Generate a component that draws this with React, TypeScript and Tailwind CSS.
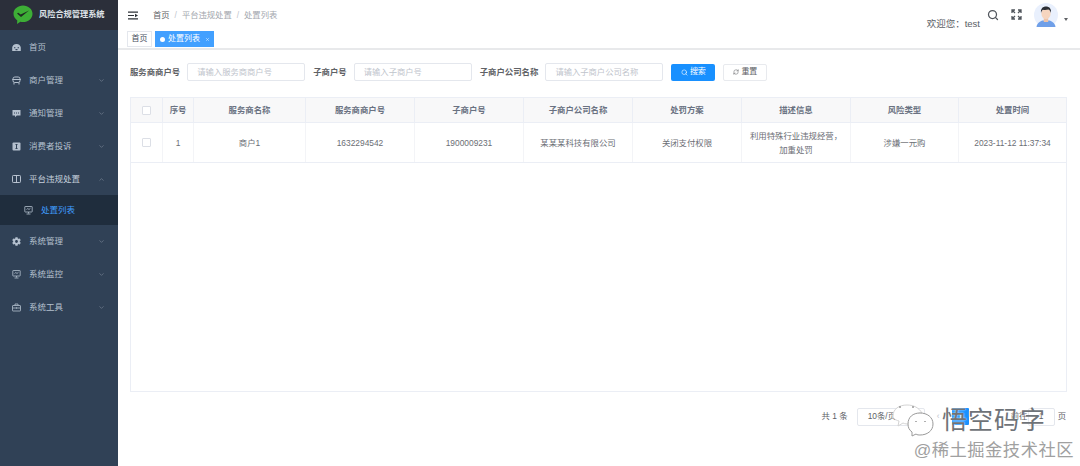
import React from 'react';
import { ChevronDown, ChevronUp, Search, RefreshCw, X } from 'lucide-react';
import { FaCog } from 'react-icons/fa';

const font = "font-['Liberation_Sans','Noto_Sans_CJK_SC',sans-serif]";

const HomeIcon = () => (
  <svg width="9" height="9" viewBox="0 0 9 9" className="shrink-0" fill="currentColor">
    <path d="M4.500 1C2 1 .4 2.600.2 4.500V8h8.600V4.500C8.600 2.600 7 1 4.500 1zM2 4.200h1.400v1H2zm3.600 0H7v1H5.600zM3.500 6h2v1.200h-2z" fillRule="evenodd" />
  </svg>
);
const BusIcon = () => (
  <svg width="9" height="9" viewBox="0 0 9 9" className="shrink-0" fill="none" stroke="currentColor" strokeWidth="1">
    <rect x="1" y="1" width="7" height="5.500" rx="1.800" />
    <path d="M.3 3.500h8.400M2 6.500V8.500M7 6.500V8.500" />
  </svg>
);
const ChatIcon = () => (
  <svg width="9" height="9" viewBox="0 0 9 9" className="shrink-0" fill="currentColor">
    <path d="M.5 1h8v5.500H4.800L3 8.300V6.500H.5z" />
    <path d="M2 3.400h1v1H2zm2 0h1v1H4zm2 0h1v1H6z" fill="#304156" />
  </svg>
);
const InfoIcon = () => (
  <svg width="9" height="9" viewBox="0 0 9 9" className="shrink-0">
    <rect x=".5" y=".5" width="8" height="8" rx="1" fill="currentColor" />
    <path d="M3.500 2h2v1h-.5v3h.5v1h-2V6H4V3h-.5z" fill="#304156" />
  </svg>
);
const BookIcon = () => (
  <svg width="9" height="8" viewBox="0 0 9 8" className="shrink-0" fill="none" stroke="currentColor" strokeWidth=".9">
    <rect x=".5" y=".5" width="8" height="7" rx=".8" />
    <path d="M4.500.5v7" />
  </svg>
);
const ScreenIcon = () => (
  <svg width="9" height="9" viewBox="0 0 9 9" className="shrink-0" fill="none" stroke="currentColor" strokeWidth=".8">
    <rect x=".8" y=".5" width="7.400" height="5.500" rx=".4" />
    <path d="M2.500 3.500l1.300-1 1.200 1 1.500-1.300M4.500 6v1.500M2.500 8h4" />
  </svg>
);
const ToolIcon = () => (
  <svg width="9" height="9" viewBox="0 0 9 9" className="shrink-0" fill="none" stroke="currentColor" strokeWidth=".8">
    <rect x=".5" y="2.500" width="8" height="5.500" rx=".4" />
    <path d="M3 2.500V1h3v1.500M.5 5h8M4.500 4.300v1.400" />
  </svg>
);

const menu = [
  { label: '首页', icon: <HomeIcon />, arrow: false, h: 'h-[34px]' },
  { label: '商户管理', icon: <BusIcon />, arrow: true, h: 'h-[33px]' },
  { label: '通知管理', icon: <ChatIcon />, arrow: true, h: 'h-[33px]' },
  { label: '消费者投诉', icon: <InfoIcon />, arrow: true, h: 'h-[33px]' },
];

const menuBottom = [
  { label: '系统管理', icon: <FaCog size={9} className="shrink-0" /> },
  { label: '系统监控', icon: <ScreenIcon /> },
  { label: '系统工具', icon: <ToolIcon /> },
];

const columns = [
  { title: '序号', width: 'w-[31px]', value: '1' },
  { title: '服务商名称', width: 'w-[112px]', value: '商户1' },
  { title: '服务商商户号', width: 'w-[109px]', value: '1632294542' },
  { title: '子商户号', width: 'w-[109px]', value: '1900009231' },
  { title: '子商户公司名称', width: 'w-[109px]', value: '某某某科技有限公司' },
  { title: '处罚方案', width: 'w-[109px]', value: '关闭支付权限' },
  { title: '描述信息', width: 'w-[109px]', value: '利用特殊行业违规经营，加重处罚' },
  { title: '风险类型', width: 'w-[108px]', value: '涉嫌一元购' },
  { title: '处置时间', width: 'flex-1', value: '2023-11-12 11:37:34' },
];

const Logo = () => (
  <svg width="20" height="20" viewBox="0 0 20 20" className="shrink-0">
    <path d="M10 .5c5.200 0 9.500 3.600 9.500 8.300 0 4.600-4.300 8.300-9.500 8.300-.9 0-1.800-.1-2.600-.3L4 19l.3-3.600C2 13.900.5 11.500.5 8.800.5 4.100 4.800.5 10 .5z" fill="#3dae36" />
    <path d="M4 8.600l1.200-.9 2.500 1.900 8.300-4.200-8 6.500z" fill="#1f2a22" />
  </svg>
);

const Avatar = () => (
  <svg width="24" height="24" viewBox="0 0 24 24">
    <circle cx="12" cy="12" r="12" fill="#e9f0fd" />
    <path d="M2.500 24c.5-4 4-6 6-6.500h7c2 .5 5.500 2.500 6 6.500z" fill="#6f9fe8" />
    <rect x="9.800" y="14" width="4.400" height="5" fill="#eec3a8" />
    <ellipse cx="12" cy="10.500" rx="4.600" ry="5.600" fill="#f6d5bf" />
    <path d="M7 10c-.6-4.500 2-6.500 5-6.500s5.600 2 5 6.500c-.4-2-1.500-3-2.500-3.500-2 .6-4.500.6-5.500.2-1 .6-1.700 1.800-2 3.300z" fill="#2b2f36" />
  </svg>
);

const Field = ({ label, placeholder, inputW }: { label: string; placeholder: string; inputW: string }) => (
  <div className="flex items-center">
    <span className="text-[8.400px] font-bold text-[#606266] whitespace-nowrap">{label}</span>
    <div className={`${inputW} ml-[7px] h-[18px] border border-[#e4e7ed] rounded-[2px] flex items-center pl-[9px] text-[8.300px] text-[#c0c4cc] whitespace-nowrap`}>
      {placeholder}
    </div>
  </div>
);

export default function App() {
  return (
    <div className={`${font} relative flex h-[466px] w-[1080px] overflow-hidden bg-white`}>
      <aside className="w-[118px] shrink-0 bg-[#304156] text-[#b4c0ce] text-[8.500px]">
        <div className="h-[30px] bg-[#2b2f3a] flex items-center pl-[13px] gap-[6px]">
          <Logo />
          <span className="text-[8.200px] font-bold text-[#dfe3e8] whitespace-nowrap">风险合规管理系统</span>
        </div>
        {menu.map((m) => (
          <div key={m.label} className={`${m.h} flex items-center pl-[12px] pr-[13px]`}>
            {m.icon}
            <span className="ml-[8px] flex-1">{m.label}</span>
            {m.arrow && <ChevronDown size={7} className="text-[#7f8b9b]" />}
          </div>
        ))}
        <div className="h-[32px] flex items-center pl-[12px] pr-[13px] text-[#c5cfdb]">
          <BookIcon />
          <span className="ml-[8px] flex-1">平台违规处置</span>
          <ChevronUp size={7} className="text-[#7f8b9b]" />
        </div>
        <div className="h-[30px] flex items-center pl-[24px] bg-[#1f2d3d]">
          <ScreenIcon />
          <span className="ml-[8px] text-[#409eff]">处置列表</span>
        </div>
        {menuBottom.map((m) => (
          <div key={m.label} className="h-[33px] flex items-center pl-[12px] pr-[13px]">
            {m.icon}
            <span className="ml-[8px] flex-1">{m.label}</span>
            <ChevronDown size={7} className="text-[#7f8b9b]" />
          </div>
        ))}
      </aside>

      <main className="flex-1 min-w-0 flex flex-col">
        <header className="h-[30px] flex items-center pl-[10px] pr-[12px]">
          <svg width="10" height="9" viewBox="0 0 10 9" className="shrink-0">
            <path d="M0 .5h10v1.200H0zM0 7.300h10v1.200H0zM0 3.900h6v1.200H0z" fill="#2f3338" />
            <path d="M7 2.800l3 1.700-3 1.700z" fill="#2f3338" />
          </svg>
          <div className="ml-[15px] text-[8.300px] flex gap-[5px] text-[#a3a7ae]">
            <span className="text-[#606266]">首页</span>
            <span className="text-[#c0c4cc]">/</span>
            <span>平台违规处置</span>
            <span className="text-[#c0c4cc]">/</span>
            <span>处置列表</span>
          </div>
          <div className="flex-1" />
          <span className="text-[9.500px] text-[#5a5e66] mt-[19px] whitespace-nowrap">欢迎您：test</span>
          <Search size={12} strokeWidth={2.500} className="ml-[7px] text-[#50555c] -mt-[1px]" />
          <svg width="11" height="11" viewBox="0 0 11 11" className="ml-[12px] -mt-[1px]">
            <path d="M1 4V1h3M1 1l3 3M10 4V1H7M10 1L7 4M1 7v3h3M1 10l3-3M10 7v3H7M10 10L7 7" fill="none" stroke="#50555c" strokeWidth="1.300" />
          </svg>
          <div className="ml-[12px]"><Avatar /></div>
          <span className="ml-[6px] mt-[9px] w-0 h-0 border-x-[2.500px] border-x-transparent border-t-[3px] border-t-[#606266]" />
        </header>

        <div className="h-[20px] flex items-center pl-[9px] gap-[3px] border-b-2 border-[#e8e9eb]">
          <span className="h-[16px] w-[25px] flex items-center justify-center border border-[#e4e7ed] text-[8px] text-[#495060]">首页</span>
          <span className="h-[16px] w-[59px] flex items-center bg-[#42a0ff] text-white text-[8px] pl-[5px]">
            <span className="w-[5px] h-[5px] rounded-full bg-white mr-[3px]" />
            处置列表
            <X size={5} className="ml-[5px]" />
          </span>
        </div>

        <section className="flex-1 px-[12px] min-h-0 flex flex-col">
          <div className="pb-[3px] flex items-center h-[47px]">
            <Field label="服务商商户号" placeholder="请输入服务商商户号" inputW="w-[118px]" />
            <div className="w-[8px]" />
            <Field label="子商户号" placeholder="请输入子商户号" inputW="w-[118px]" />
            <div className="w-[8px]" />
            <Field label="子商户公司名称" placeholder="请输入子商户公司名称" inputW="w-[118px]" />
            <button className="ml-[8px] h-[17px] w-[44px] bg-[#1890ff] rounded-[2px] text-white text-[8px] flex items-center justify-center gap-[2px]">
              <Search size={7} />搜索
            </button>
            <button className="ml-[8px] h-[17px] w-[44px] border border-[#e8eaee] rounded-[2px] text-[#606266] text-[8px] flex items-center justify-center gap-[2px]">
              <RefreshCw size={6} />重置
            </button>
          </div>

          <div className="h-[295px] w-[937px] border border-[#ebeef5] text-[8.400px] text-[#6b6e75]">
            <div className="flex h-[25px] bg-[#f8f8f9] border-b border-[#ebeef5] font-bold text-[#6a7282]">
              <div className="w-[32px] shrink-0 flex items-center justify-center border-r border-[#ebeef5]">
                <span className="w-[9px] h-[9px] bg-white border border-[#dcdfe6] rounded-[1px]" />
              </div>
              {columns.map((c, i) => (
                <div key={c.title} className={`${c.width} shrink-0 flex items-center justify-center whitespace-nowrap ${i < columns.length - 1 ? 'border-r border-[#ebeef5]' : ''}`}>
                  {c.title}
                </div>
              ))}
            </div>
            <div className="flex h-[40px] border-b border-[#ebeef5]">
              <div className="w-[32px] shrink-0 flex items-center justify-center border-r border-[#f3f4f7]">
                <span className="w-[9px] h-[9px] bg-white border border-[#dcdfe6] rounded-[1px]" />
              </div>
              {columns.map((c, i) => (
                <div key={c.title} className={`${c.width} shrink-0 flex items-center justify-center text-center leading-[14px] ${i === 6 ? 'px-[6px]' : 'whitespace-nowrap'} ${i < columns.length - 1 ? 'border-r border-[#f3f4f7]' : ''}`}>
                  {c.value}
                </div>
              ))}
            </div>
          </div>

          <div className="h-[19px] mt-[15px] flex items-center justify-end text-[8.400px] text-[#606266] pr-[2px]">
            <span>共 1 条</span>
            <span className="ml-[9px] h-[18px] w-[68px] border border-[#e4e7ed] rounded-[2px] flex items-center pl-[10px]">10条/页</span>
            <span className="w-[27px] text-center text-[#c0c4cc]">‹</span>
            <span className="h-[17px] w-[17px] bg-[#1890ff] text-white rounded-[1px] flex items-center justify-center">1</span>
            <span className="w-[42px] text-center text-[#c0c4cc]">›</span>
            <span className="w-[15px] whitespace-nowrap">前往</span>
            <span className="ml-[2px] h-[18px] w-[27px] border border-[#e4e7ed] rounded-[2px] flex items-center justify-center">1</span>
            <span className="ml-[3px]">页</span>
          </div>
        </section>
      </main>

      {/* watermark over the pager */}
      <div className="absolute right-[6px] bottom-[4px] flex flex-col items-end">
        <div className="flex items-center mr-[28px]">
          <svg width="44" height="34" viewBox="0 0 44 34" fill="none" className="mr-[6px]">
            <path d="M1 13C1 6 7 2 15 2c7 0 12 3 15 8-8 0-13 5-13 11-2 0-4 0-6-1l-5 3 1-5c-4-1-6-3-6-5z" fill="#ffffff" stroke="#d4d4d4" />
            <path d="M16 21c0-7 5-11 12-11s13 4 13 11-6 11-13 11c-1 0-3 0-4-1l-4 2v-4c-3-2-4-5-4-8z" fill="#ffffff" stroke="#9a9a9a" />
            <circle cx="8" cy="4" r="1" fill="#9a9a9a" /><circle cx="21" cy="4" r="1" fill="#9a9a9a" />
            <path d="M23 19l1-1 1 1M32 19l1-1 1 1" stroke="#9a9a9a" strokeWidth=".8" />
          </svg>
          <span className="text-[25px] leading-[28px] text-[#6f7378] tracking-[1px] -mt-[1px] [text-shadow:0_0_2px_#fff]">悟空码字</span>
        </div>
        <span className="text-[17.300px] leading-[24px] text-[#a0a0a0] tracking-[0.500px] mt-[1px]">@稀土掘金技术社区</span>
      </div>
    </div>
  );
}
